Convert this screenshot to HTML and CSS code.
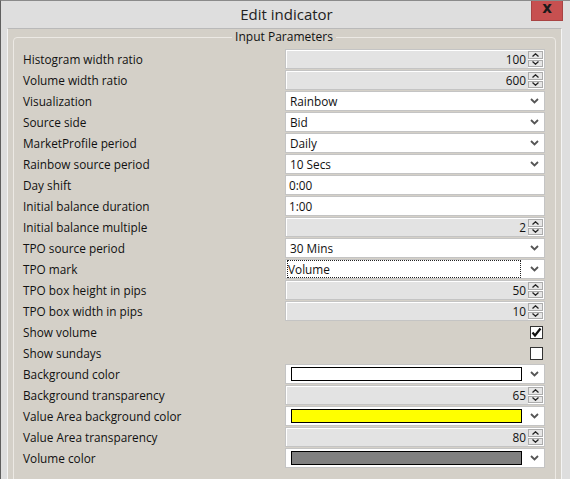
FILE: index.html
```html
<!DOCTYPE html>
<html>
<head>
<meta charset="utf-8">
<link rel="stylesheet" href="styles.css">
</head>
<body>
<div class="window">
  <div class="titlebar">
    <span class="spacer"></span>
    <span class="title">Edit indicator</span>
    <span class="close-cell"><span class="close">x</span></span>
  </div>
  <div class="client">
    <fieldset class="group">
      <legend>Input Parameters</legend>
      <div class="rows">
        <div class="label">Histogram width ratio</div>
        <div class="spin"><span class="val">100</span><span class="btns"><span class="sbtn"><svg width="7" height="4" viewBox="0 0 7 4"><polyline points="0.5,3.5 3.5,0.8 6.5,3.5" fill="none" stroke="#222" stroke-width="1.3"/></svg></span><span class="sbtn"><svg width="7" height="4" viewBox="0 0 7 4"><polyline points="0.5,0.5 3.5,3.2 6.5,0.5" fill="none" stroke="#222" stroke-width="1.3"/></svg></span></span></div>

        <div class="label">Volume width ratio</div>
        <div class="spin"><span class="val">600</span><span class="btns"><span class="sbtn"><svg width="7" height="4" viewBox="0 0 7 4"><polyline points="0.5,3.5 3.5,0.8 6.5,3.5" fill="none" stroke="#222" stroke-width="1.3"/></svg></span><span class="sbtn"><svg width="7" height="4" viewBox="0 0 7 4"><polyline points="0.5,0.5 3.5,3.2 6.5,0.5" fill="none" stroke="#222" stroke-width="1.3"/></svg></span></span></div>

        <div class="label">Visualization</div>
        <div class="combo"><span class="ctext">Rainbow</span><svg class="chev" width="9" height="6" viewBox="0 0 9 6"><polyline points="1,1 4.5,4.5 8,1" fill="none" stroke="#555" stroke-width="1.8"/></svg></div>

        <div class="label">Source side</div>
        <div class="combo"><span class="ctext">Bid</span><svg class="chev" width="9" height="6" viewBox="0 0 9 6"><polyline points="1,1 4.5,4.5 8,1" fill="none" stroke="#555" stroke-width="1.8"/></svg></div>

        <div class="label">MarketProfile period</div>
        <div class="combo"><span class="ctext">Daily</span><svg class="chev" width="9" height="6" viewBox="0 0 9 6"><polyline points="1,1 4.5,4.5 8,1" fill="none" stroke="#555" stroke-width="1.8"/></svg></div>

        <div class="label">Rainbow source period</div>
        <div class="combo"><span class="ctext">10 Secs</span><svg class="chev" width="9" height="6" viewBox="0 0 9 6"><polyline points="1,1 4.5,4.5 8,1" fill="none" stroke="#555" stroke-width="1.8"/></svg></div>

        <div class="label">Day shift</div>
        <div class="edit">0:00</div>

        <div class="label">Initial balance duration</div>
        <div class="edit">1:00</div>

        <div class="label">Initial balance multiple</div>
        <div class="spin"><span class="val">2</span><span class="btns"><span class="sbtn"><svg width="7" height="4" viewBox="0 0 7 4"><polyline points="0.5,3.5 3.5,0.8 6.5,3.5" fill="none" stroke="#222" stroke-width="1.3"/></svg></span><span class="sbtn"><svg width="7" height="4" viewBox="0 0 7 4"><polyline points="0.5,0.5 3.5,3.2 6.5,0.5" fill="none" stroke="#222" stroke-width="1.3"/></svg></span></span></div>

        <div class="label">TPO source period</div>
        <div class="combo"><span class="ctext">30 Mins</span><svg class="chev" width="9" height="6" viewBox="0 0 9 6"><polyline points="1,1 4.5,4.5 8,1" fill="none" stroke="#555" stroke-width="1.8"/></svg></div>

        <div class="label">TPO mark</div>
        <div class="combo"><span class="ctext focus">Volume</span><svg class="chev" width="9" height="6" viewBox="0 0 9 6"><polyline points="1,1 4.5,4.5 8,1" fill="none" stroke="#555" stroke-width="1.8"/></svg></div>

        <div class="label">TPO box height in pips</div>
        <div class="spin"><span class="val">50</span><span class="btns"><span class="sbtn"><svg width="7" height="4" viewBox="0 0 7 4"><polyline points="0.5,3.5 3.5,0.8 6.5,3.5" fill="none" stroke="#222" stroke-width="1.3"/></svg></span><span class="sbtn"><svg width="7" height="4" viewBox="0 0 7 4"><polyline points="0.5,0.5 3.5,3.2 6.5,0.5" fill="none" stroke="#222" stroke-width="1.3"/></svg></span></span></div>

        <div class="label">TPO box width in pips</div>
        <div class="spin"><span class="val">10</span><span class="btns"><span class="sbtn"><svg width="7" height="4" viewBox="0 0 7 4"><polyline points="0.5,3.5 3.5,0.8 6.5,3.5" fill="none" stroke="#222" stroke-width="1.3"/></svg></span><span class="sbtn"><svg width="7" height="4" viewBox="0 0 7 4"><polyline points="0.5,0.5 3.5,3.2 6.5,0.5" fill="none" stroke="#222" stroke-width="1.3"/></svg></span></span></div>

        <div class="label">Show volume</div>
        <div class="checkcell"><span class="check"><svg width="11" height="11" viewBox="0 0 11 11"><polyline points="1.5,5.5 4,8.5 9.5,1.5" fill="none" stroke="#111" stroke-width="2.2"/></svg></span></div>

        <div class="label">Show sundays</div>
        <div class="checkcell"><span class="check"></span></div>

        <div class="label">Background color</div>
        <div class="combo"><span class="swatch white"></span><svg class="chev" width="9" height="6" viewBox="0 0 9 6"><polyline points="1,1 4.5,4.5 8,1" fill="none" stroke="#555" stroke-width="1.8"/></svg></div>

        <div class="label">Background transparency</div>
        <div class="spin"><span class="val">65</span><span class="btns"><span class="sbtn"><svg width="7" height="4" viewBox="0 0 7 4"><polyline points="0.5,3.5 3.5,0.8 6.5,3.5" fill="none" stroke="#222" stroke-width="1.3"/></svg></span><span class="sbtn"><svg width="7" height="4" viewBox="0 0 7 4"><polyline points="0.5,0.5 3.5,3.2 6.5,0.5" fill="none" stroke="#222" stroke-width="1.3"/></svg></span></span></div>

        <div class="label">Value Area background color</div>
        <div class="combo"><span class="swatch yellow"></span><svg class="chev" width="9" height="6" viewBox="0 0 9 6"><polyline points="1,1 4.5,4.5 8,1" fill="none" stroke="#555" stroke-width="1.8"/></svg></div>

        <div class="label">Value Area transparency</div>
        <div class="spin"><span class="val">80</span><span class="btns"><span class="sbtn"><svg width="7" height="4" viewBox="0 0 7 4"><polyline points="0.5,3.5 3.5,0.8 6.5,3.5" fill="none" stroke="#222" stroke-width="1.3"/></svg></span><span class="sbtn"><svg width="7" height="4" viewBox="0 0 7 4"><polyline points="0.5,0.5 3.5,3.2 6.5,0.5" fill="none" stroke="#222" stroke-width="1.3"/></svg></span></span></div>

        <div class="label">Volume color</div>
        <div class="combo"><span class="swatch gray"></span><svg class="chev" width="9" height="6" viewBox="0 0 9 6"><polyline points="1,1 4.5,4.5 8,1" fill="none" stroke="#555" stroke-width="1.8"/></svg></div>
      </div>
    </fieldset>
  </div>
</div>
</body>
</html>
```

FILE: styles.css
```css
html, body {
  margin: 0;
  padding: 0;
  background: #dcdcdc;
}
body {
  font-family: "Open Sans", "Noto Sans", sans-serif;
  font-size: 11.8px;
  color: #111;
}
.window {
  width: 570px;
  height: 479px;
  box-sizing: border-box;
  border-left: 1px solid #5f5f5f;
  border-top: 1px solid #8a8a8a;
  background: #dedede;
  overflow: hidden;
  display: flex;
  flex-direction: column;
}
.titlebar {
  height: 27px;
  display: grid;
  grid-template-columns: 1fr auto 1fr;
  align-items: start;
}
.title {
  font-size: 15px;
  line-height: 27px;
  color: #222;
  padding-left: 2px;
}
.close-cell {
  display: flex;
  justify-content: flex-end;
  padding-right: 7px;
}
.close {
  width: 32px;
  height: 21px;
  margin-top: -1px;
  background: #c75050;
  border: 1px solid #a84343;
  border-top: none;
  box-sizing: border-box;
  display: flex;
  align-items: center;
  justify-content: center;
  font-family: "DejaVu Sans", sans-serif;
  font-weight: bold;
  font-size: 15px;
  color: #1a1a1a;
  line-height: 1;
  padding-bottom: 3px;
}
.client {
  flex: 1;
  margin: 0 8px 0 6px;
  background: #d4d0c8;
  border-top: 1px solid #b9b9b9;
  border-left: 1px solid #f4f4f4;
  border-right: 1px solid #f4f4f4;
}
.group {
  margin: 0 5px;
  padding: 4px 10px 20px 9px;
  border: 1px solid #ece9e4;
  border-radius: 4px;
  min-width: 0;
}
.group legend {
  margin: 0 auto;
  padding: 0 3px;
  line-height: 16px;
  font-size: 12px;
  color: #111;
}
.rows {
  display: grid;
  grid-template-columns: 1fr 260px;
  grid-auto-rows: 20px;
  row-gap: 1px;
}
.label {
  display: flex;
  align-items: center;
  white-space: nowrap;
}
.spin {
  display: flex;
  align-items: stretch;
  border: 1px solid #c4c4c4;
  background: #e3e3e3;
  box-shadow: inset 1px 1px 0 #ffffff;
  box-sizing: border-box;
}
.spin .val {
  flex: 1;
  text-align: right;
  line-height: 18px;
  padding-right: 2px;
}
.btns {
  width: 15px;
  display: flex;
  flex-direction: column;
  gap: 1px;
  padding: 1px 1px 1px 0;
  background: #ffffff;
}
.sbtn {
  flex: 1;
  background: #e6e6e6;
  border: 1px solid #acacac;
  display: flex;
  align-items: center;
  justify-content: center;
}
.combo, .edit {
  display: flex;
  align-items: center;
  background: #ffffff;
  border: 1px solid #c4c4c4;
  box-sizing: border-box;
}
.edit {
  padding-left: 3px;
}
.ctext {
  flex: 1;
  padding-left: 3px;
  line-height: 16px;
  margin-right: 9px;
  border: 1px solid transparent;
}
.ctext.focus {
  border: 1px dotted #222;
  margin-left: 1px;
  padding-left: 0;
}
.chev {
  margin-right: 5px;
}
.swatch {
  flex: 1;
  height: 14px;
  box-sizing: border-box;
  margin: 0 8px 0 5px;
  border: 1px solid #000;
}
.swatch.white { background: #ffffff; }
.swatch.yellow { background: #ffff00; }
.swatch.gray { background: #808080; }
.checkcell {
  display: flex;
  align-items: center;
  justify-content: flex-end;
  padding-right: 2px;
}
.check {
  width: 13px;
  height: 13px;
  box-sizing: border-box;
  border: 1px solid #333;
  background: #fff;
  display: flex;
  align-items: center;
  justify-content: center;
}
```
